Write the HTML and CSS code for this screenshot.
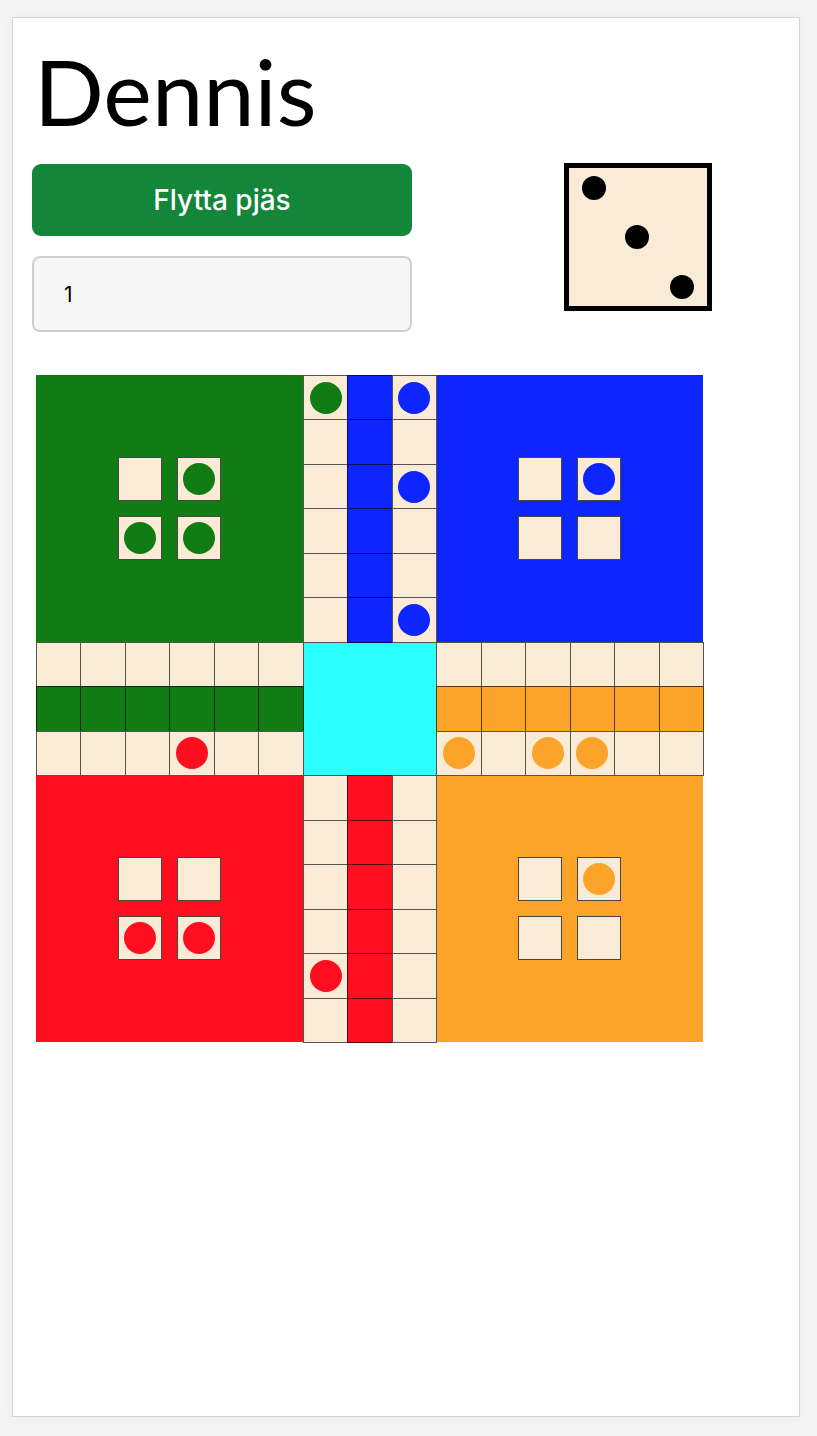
FILE: index.html
```html
<!DOCTYPE html>
<html lang="sv">
<head>
<meta charset="utf-8">
<title>Fia med knuff</title>
<link rel="stylesheet" href="styles.css">
</head>
<body>
<div class="page">
  <main class="panel">
    <h1 class="title">Dennis</h1>
    <div class="controls">
      <div class="actions">
        <button class="move-btn" type="button">Flytta pjäs</button>
        <input class="piece-input" type="text" value="1">
      </div>
      <svg class="die" width="148" height="148" viewBox="0 0 148 148">
        <rect x="2.5" y="2.5" width="143" height="143" fill="#faebd7" stroke="#000" stroke-width="5"/>
        <circle cx="30" cy="25" r="12" fill="#000"/>
        <circle cx="73" cy="74" r="12" fill="#000"/>
        <circle cx="118" cy="124" r="12" fill="#000"/>
      </svg>
    </div>

    <div class="board">
      <div class="home home-green">
        <div class="yard">
          <div class="slot"></div>
          <div class="slot"><span class="piece green"></span></div>
          <div class="slot"><span class="piece green"></span></div>
          <div class="slot"><span class="piece green"></span></div>
        </div>
      </div>
      <div class="home home-blue">
        <div class="yard">
          <div class="slot"></div>
          <div class="slot"><span class="piece blue"></span></div>
          <div class="slot"></div>
          <div class="slot"></div>
        </div>
      </div>
      <div class="home home-red">
        <div class="yard">
          <div class="slot"></div>
          <div class="slot"></div>
          <div class="slot"><span class="piece red"></span></div>
          <div class="slot"><span class="piece red"></span></div>
        </div>
      </div>
      <div class="home home-orange">
        <div class="yard">
          <div class="slot"></div>
          <div class="slot"><span class="piece orange"></span></div>
          <div class="slot"></div>
          <div class="slot"></div>
        </div>
      </div>
      <div class="center"></div>

      <!-- rows 0-5 -->
      <div class="cell"><span class="piece green"></span></div><div class="cell c-blue"></div><div class="cell"><span class="piece blue"></span></div>
      <div class="cell"></div><div class="cell c-blue"></div><div class="cell"></div>
      <div class="cell"></div><div class="cell c-blue"></div><div class="cell"><span class="piece blue"></span></div>
      <div class="cell"></div><div class="cell c-blue"></div><div class="cell"></div>
      <div class="cell"></div><div class="cell c-blue"></div><div class="cell"></div>
      <div class="cell"></div><div class="cell c-blue"></div><div class="cell"><span class="piece blue"></span></div>

      <!-- row 6 -->
      <div class="cell"></div><div class="cell"></div><div class="cell"></div><div class="cell"></div><div class="cell"></div><div class="cell"></div>
      <div class="cell"></div><div class="cell"></div><div class="cell"></div><div class="cell"></div><div class="cell"></div><div class="cell"></div>
      <!-- row 7 -->
      <div class="cell c-green"></div><div class="cell c-green"></div><div class="cell c-green"></div><div class="cell c-green"></div><div class="cell c-green"></div><div class="cell c-green"></div>
      <div class="cell c-orange"></div><div class="cell c-orange"></div><div class="cell c-orange"></div><div class="cell c-orange"></div><div class="cell c-orange"></div><div class="cell c-orange"></div>
      <!-- row 8 -->
      <div class="cell"></div><div class="cell"></div><div class="cell"></div><div class="cell"><span class="piece red"></span></div><div class="cell"></div><div class="cell"></div>
      <div class="cell"><span class="piece orange"></span></div><div class="cell"></div><div class="cell"><span class="piece orange"></span></div><div class="cell"><span class="piece orange"></span></div><div class="cell"></div><div class="cell"></div>

      <!-- rows 9-14 -->
      <div class="cell"></div><div class="cell c-red"></div><div class="cell"></div>
      <div class="cell"></div><div class="cell c-red"></div><div class="cell"></div>
      <div class="cell"></div><div class="cell c-red"></div><div class="cell"></div>
      <div class="cell"></div><div class="cell c-red"></div><div class="cell"></div>
      <div class="cell"><span class="piece red"></span></div><div class="cell c-red"></div><div class="cell"></div>
      <div class="cell"></div><div class="cell c-red"></div><div class="cell"></div>
    </div>
  </main>
</div>
</body>
</html>
```

FILE: styles.css
```css
* { box-sizing: border-box; }

html, body {
  margin: 0;
  padding: 0;
  background: #f4f4f4;
}

.page {
  padding: 17px 0 0 12px;
  height: 1436px;
}

.panel {
  width: 788px;
  height: 1400px;
  background: #fff;
  border: 1px solid #d4d4d4;
  box-shadow: 0 0 12px rgba(0,0,0,0.04);
  padding: 16px 19px 0 19px;
}

.title {
  margin: 0;
  font-family: "Lato", "Noto Sans", sans-serif;
  font-weight: 400;
  font-size: 92px;
  line-height: 113px;
  color: #000;
  padding-left: 2px;
}

.controls {
  display: flex;
  align-items: flex-start;
  margin-top: 16px;
}

.actions {
  display: flex;
  flex-direction: column;
  gap: 20px;
  width: 380px;
  padding-top: 1px;
}

.move-btn {
  height: 72px;
  border: none;
  border-radius: 9px;
  background: #13863a;
  color: #fff;
  font-family: "Inter", "Noto Sans", sans-serif;
  font-size: 28px;
  font-weight: 500;
  cursor: pointer;
}

.piece-input {
  height: 76px;
  border: 2px solid #cfcfcf;
  border-radius: 8px;
  background: #f7f7f7;
  padding: 0 30px;
  font-family: "Inter", "Noto Sans", sans-serif;
  font-size: 21px;
  color: #000;
}

.die {
  display: block;
  margin-left: 152px;
}

.board {
  margin: 43px 0 0 4px;
  width: 667px;
  height: 667px;
  display: grid;
  grid-template-columns: repeat(15, 1fr);
  grid-template-rows: repeat(15, 1fr);
}

.home {
  display: flex;
  align-items: center;
  justify-content: center;
}
.home-green  { grid-area: 1 / 1 / 7 / 7;   background: #117c13; }
.home-blue   { grid-area: 1 / 10 / 7 / 16; background: #0d25ff; }
.home-red    { grid-area: 10 / 1 / 16 / 7; background: #ff0e1f; }
.home-orange { grid-area: 10 / 10 / 16 / 16; background: #fca32a; }
.center      { grid-area: 7 / 7 / 10 / 10; background: #2bffff; }

.yard {
  display: grid;
  grid-template-columns: 44px 44px;
  grid-template-rows: 44px 44px;
  gap: 15px;
}

.slot {
  background: #faebd7;
  border: 1px solid rgba(0,0,0,0.7);
  display: flex;
  align-items: center;
  justify-content: center;
}

.cell {
  background: #faebd7;
  border: 1px solid rgba(0,0,0,0.65);
  margin: 0 -1px -1px 0;
  display: flex;
  align-items: center;
  justify-content: center;
}

.c-blue   { background: #0d25ff; }
.c-green  { background: #117c13; }
.c-orange { background: #fca32a; }
.c-red    { background: #ff0e1f; }

.piece {
  display: block;
  width: 32px;
  height: 32px;
  border-radius: 50%;
}
.piece.green  { background: #117c13; }
.piece.blue   { background: #0d25ff; }
.piece.red    { background: #ff0e1f; }
.piece.orange { background: #fca32a; }
```
